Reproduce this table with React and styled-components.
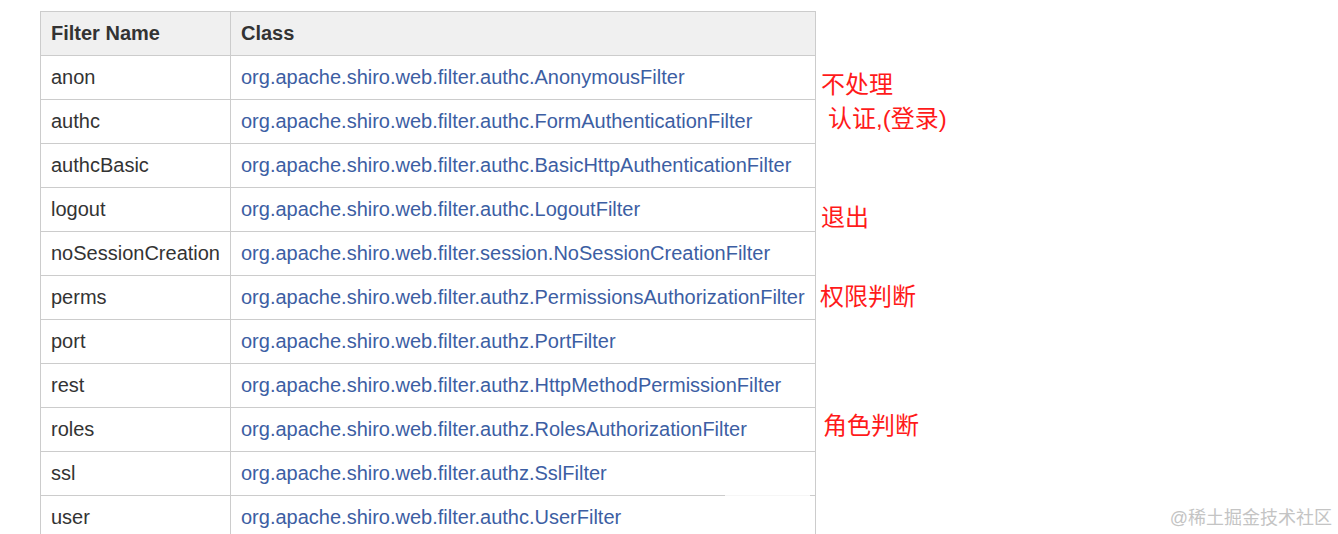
import React from "react";
import styled, { createGlobalStyle } from "styled-components";

const filters = [
  { name: "anon", cls: "org.apache.shiro.web.filter.authc.AnonymousFilter" },
  { name: "authc", cls: "org.apache.shiro.web.filter.authc.FormAuthenticationFilter" },
  { name: "authcBasic", cls: "org.apache.shiro.web.filter.authc.BasicHttpAuthenticationFilter" },
  { name: "logout", cls: "org.apache.shiro.web.filter.authc.LogoutFilter" },
  { name: "noSessionCreation", cls: "org.apache.shiro.web.filter.session.NoSessionCreationFilter" },
  { name: "perms", cls: "org.apache.shiro.web.filter.authz.PermissionsAuthorizationFilter" },
  { name: "port", cls: "org.apache.shiro.web.filter.authz.PortFilter" },
  { name: "rest", cls: "org.apache.shiro.web.filter.authz.HttpMethodPermissionFilter" },
  { name: "roles", cls: "org.apache.shiro.web.filter.authz.RolesAuthorizationFilter" },
  { name: "ssl", cls: "org.apache.shiro.web.filter.authz.SslFilter" },
  { name: "user", cls: "org.apache.shiro.web.filter.authc.UserFilter" },
];

const notes = [
  { text: "不处理", offset: 57, indent: 5 },
  { text: "认证,(登录)", offset: 0, indent: 12 },
  { text: "退出", offset: 65, indent: 5 },
  { text: "权限判断", offset: 45, indent: 4 },
  { text: "角色判断", offset: 95, indent: 7 },
];

const App = () => {
  return (
    <>
      <GlobalStyle />
      <Page>
        <Table>
          <thead>
            <tr>
              <Th style={{ width: 169 }}>Filter Name</Th>
              <Th>Class</Th>
            </tr>
          </thead>
          <tbody>
            {filters.map((f) => (
              <tr key={f.name}>
                <Td>{f.name}</Td>
                <LinkTd>{f.cls}</LinkTd>
              </tr>
            ))}
          </tbody>
        </Table>
        <Notes>
          {notes.map((n) => (
            <Note key={n.text} $offset={n.offset} $indent={n.indent}>
              {n.text}
            </Note>
          ))}
        </Notes>
        <Glitch />
        <Watermark>@稀土掘金技术社区</Watermark>
      </Page>
    </>
  );
};

export default App;

const GlobalStyle = createGlobalStyle`
  html, body {
    margin: 0;
    padding: 0;
    background: #fff;
    overflow: hidden;
  }
  body {
    width: 1338px;
    height: 534px;
    font-family: "Liberation Sans", Arial, "Noto Sans CJK SC", sans-serif;
  }
`;

const Page = styled.div`
  position: relative;
  display: flex;
  align-items: flex-start;
  width: 1338px;
  height: 534px;
  padding: 11px 0 0 40px;
  box-sizing: border-box;
  overflow: hidden;
`;

const Table = styled.table`
  border-collapse: collapse;
  width: 776px;
  font-size: 20px;
  color: #333;
  table-layout: fixed;

  tr {
    height: 44px;
  }
`;

const Th = styled.th`
  background: #f0f0f0;
  border: 1px solid #cccccc;
  padding: 0 10px;
  text-align: left;
  font-weight: bold;
  color: #333;
`;

const Td = styled.td`
  border: 1px solid #cccccc;
  padding: 0 10px;
  white-space: nowrap;
  overflow: visible;
`;

const LinkTd = styled(Td)`
  color: #3c5ea3;
`;

const Notes = styled.div`
  display: flex;
  flex-direction: column;
`;

const Note = styled.div`
  margin-top: ${(p) => p.$offset}px;
  padding-left: ${(p) => p.$indent}px;
  height: 34px;
  line-height: 34px;
  font-size: 24px;
  color: #ff1a1a;
  font-family: "Liberation Sans", "Noto Sans CJK SC", sans-serif;
  white-space: nowrap;
`;

const Glitch = styled.div`
  position: absolute;
  left: 725px;
  top: 495px;
  width: 85px;
  height: 1px;
  background: #f6f6f6;
`;

const Watermark = styled.div`
  position: absolute;
  right: 6px;
  bottom: 5px;
  font-size: 18px;
  color: #c4c4c4;
  font-family: "Liberation Sans", "Noto Sans CJK SC", sans-serif;
`;
